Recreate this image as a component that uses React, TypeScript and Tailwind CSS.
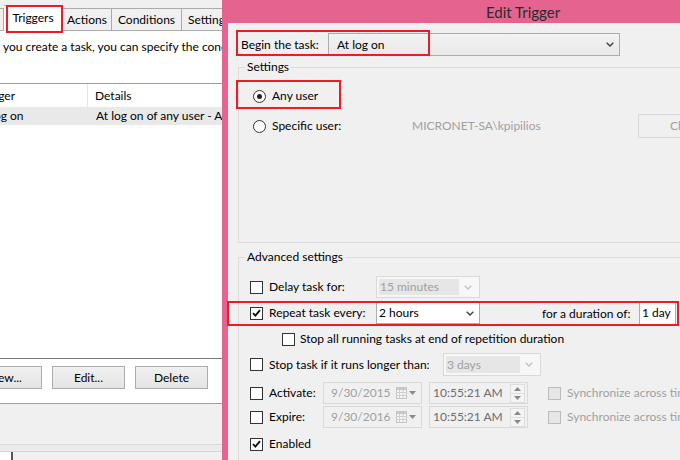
import React from "react";

function Check({ checked = false, disabled = false }: { checked?: boolean; disabled?: boolean }) {
  return (
    <span
      className={
        disabled
          ? "w-[13px] h-[13px] shrink-0 border border-[#bcbcbc] bg-[#e6e6e6] flex items-center justify-center"
          : "w-[13px] h-[13px] shrink-0 border border-[#333333] bg-white flex items-center justify-center"
      }
    >
      {checked && (
        <svg width="9" height="8" viewBox="0 0 9 8">
          <path d="M1 4.2 L3.4 6.6 L8 1.2" stroke="#111" strokeWidth="1.9" fill="none" />
        </svg>
      )}
    </span>
  );
}

function Radio({ checked = false }: { checked?: boolean }) {
  return (
    <span className="w-[13px] h-[13px] shrink-0 rounded-full border border-[#333333] bg-white flex items-center justify-center">
      {checked && <span className="w-[5px] h-[5px] rounded-full bg-[#222222]" />}
    </span>
  );
}

function Chevron({ color = "#404040" }: { color?: string }) {
  return (
    <svg width="8" height="5" viewBox="0 0 8 5">
      <path d="M0.7 0.7 L4 4 L7.3 0.7" stroke={color} strokeWidth="1.4" fill="none" />
    </svg>
  );
}

function Calendar() {
  return (
    <svg width="11" height="12" viewBox="0 0 11 12">
      <rect x="0.5" y="0.5" width="10" height="11" fill="#f4f4f4" stroke="#c4c4c4" />
      <rect x="0.5" y="0.5" width="10" height="2.5" fill="#c8c8c8" />
      <path d="M3.5 3 V11.5 M7 3 V11.5 M0.5 5.5 H10.5 M0.5 8.5 H10.5" stroke="#d0d0d0" strokeWidth="1" />
    </svg>
  );
}

function SmallTri({ up = false }: { up?: boolean }) {
  return (
    <svg width="7" height="4" viewBox="0 0 7 4">
      {up ? <path d="M0 4 L3.5 0 L7 4 Z" fill="#8a8a8a" /> : <path d="M0 0 L3.5 4 L7 0 Z" fill="#8a8a8a" />}
    </svg>
  );
}

function DisabledCombo({ text, w, h }: { text: string; w: string; h: string }) {
  return (
    <div className={`${w} ${h} shrink-0 border border-[#d9d9d9] bg-[#f7f7f7] flex items-stretch p-[2px]`}>
      <div className="flex-1 bg-[#e6e6e6] text-[#a0a0a0] pl-[1px] flex items-center">{text}</div>
      <div className="w-[18px] flex items-center justify-center">
        <Chevron color="#c2c2c2" />
      </div>
    </div>
  );
}

function DateBox({ text }: { text: string }) {
  return (
    <div className="w-[99px] h-[22px] shrink-0 border border-[#d9d9d9] bg-[#f0f0f0] flex items-center pl-[7px]">
      <span className="text-[#a0a0a0] flex-1">{text}</span>
      <span className="flex items-center gap-[2px] pr-[5px]">
        <Calendar />
        <SmallTri />
      </span>
    </div>
  );
}

function TimeBox() {
  return (
    <div className="w-[99px] h-[22px] shrink-0 border border-[#d9d9d9] bg-[#f0f0f0] flex items-center pl-[3px]">
      <span className="text-[#6d6d6d] flex-1">10:55:21 AM</span>
      <span className="w-[15px] h-[19px] mr-[2px] flex flex-col border border-[#dedede]">
        <span className="flex-1 flex items-center justify-center border-b border-[#dedede] bg-[#f4f4f4]">
          <SmallTri up />
        </span>
        <span className="flex-1 flex items-center justify-center bg-[#f4f4f4]">
          <SmallTri />
        </span>
      </span>
    </div>
  );
}

function Btn({ label, extra = "" }: { label: string; extra?: string }) {
  return (
    <div
      className={`w-[73px] h-[23px] shrink-0 border border-[#acacac] bg-gradient-to-b from-[#f0f0f0] to-[#e5e5e5] flex items-center justify-center text-black ${extra}`}
    >
      {label}
    </div>
  );
}

function LeftWindow() {
  return (
    <div className="w-[222px] h-[460px] shrink-0 flex flex-col bg-[#f0f0f0] overflow-hidden">
      {/* tabs */}
      <div className="h-[31px] shrink-0 flex items-end border-b border-[#acacac]">
        <div className="w-[4px] h-[22px] shrink-0 border-r border-t border-[#acacac] bg-[#f0f0f0]" />
        <div className="w-[59px] h-[26px] shrink-0 -mb-[1px] border border-b-0 border-l-0 border-[#acacac] bg-white flex items-center justify-center pb-[2px]">
          Triggers
        </div>
        <div className="w-[49px] h-[22px] shrink-0 border-t border-r border-[#acacac] bg-[#f0f0f0] flex items-center justify-center">
          Actions
        </div>
        <div className="w-[70px] h-[22px] shrink-0 border-t border-r border-[#acacac] bg-[#f0f0f0] flex items-center justify-center">
          Conditions
        </div>
        <div className="w-[60px] h-[22px] shrink-0 border-t border-r border-[#acacac] bg-[#f0f0f0] flex items-center pl-[6px] whitespace-nowrap">
          Settings
        </div>
      </div>
      {/* panel */}
      <div className="h-[373px] shrink-0 bg-white border-b border-[#a0a0a0] flex flex-col">
        <div className="mt-[8px] h-[16px] pl-[3px] whitespace-nowrap overflow-hidden">
          you create a task, you can specify the conditions that will trigger the task.
        </div>
        <div className="mt-[28px] h-[276px] shrink-0 border-t border-[#a0a0a0] border-b border-b-[#7a7a7a] flex flex-col">
          <div className="h-[23px] shrink-0 flex items-center">
            <div className="w-[88px] h-full shrink-0 flex items-center border-r border-[#e5e5e5] overflow-hidden">
              <span className="-ml-[21px] whitespace-nowrap">Trigger</span>
            </div>
            <div className="pl-[7px] whitespace-nowrap">Details</div>
          </div>
          <div className="h-[18px] shrink-0 flex items-center bg-[#e9e9e9]">
            <div className="w-[88px] shrink-0 overflow-hidden">
              <span className="-ml-[24px] whitespace-nowrap inline-block">At log on</span>
            </div>
            <div className="pl-[8px] whitespace-nowrap overflow-hidden">At log on of any user - At log on of any user</div>
          </div>
        </div>
        <div className="mt-[7px] flex items-center">
          <div className="w-[42px] overflow-hidden shrink-0">
            <Btn label="New..." extra="-ml-[31px]" />
          </div>
          <div className="ml-[10px]">
            <Btn label="Edit..." />
          </div>
          <div className="ml-[10px]">
            <Btn label="Delete" />
          </div>
        </div>
      </div>
      <div className="h-[41px] shrink-0 bg-[#f0f0f0] border-b border-[#d9d9d9]" />
      <div className="h-[7px] shrink-0 bg-[#ebebeb] border-b border-[#d4d4d4]" />
      <div className="flex-1 flex">
        <div className="w-[11px] bg-white" />
        <div className="w-[2px] bg-[#555555]" />
        <div className="flex-1 bg-[#f0f0f0]" />
      </div>
    </div>
  );
}

function Dialog() {
  return (
    <div className="w-[602px] h-[460px] shrink-0 bg-[#e5638f] flex flex-col pl-[6px]">
      <div className="h-[23px] shrink-0 flex items-center justify-center text-[15px] text-[#2b2b2b] -ml-[6px]">
        Edit Trigger
      </div>
      <div className="flex-1 bg-[#f0f0f0] flex flex-col">
        {/* begin the task */}
        <div className="mt-[10px] ml-[13px] h-[23px] flex items-center">
          <span className="w-[87px] shrink-0">Begin the task:</span>
          <div className="w-[292px] h-[23px] border border-[#acacac] bg-gradient-to-b from-[#f2f2f2] to-[#e9e9e9] flex items-center pl-[8px]">
            <span className="flex-1">At log on</span>
            <span className="pr-[5px] flex items-center">
              <Chevron />
            </span>
          </div>
        </div>

        {/* Settings */}
        <fieldset className="mt-[3px] ml-[10px] w-[470px] h-[184px] shrink-0 border border-[#dcdcdc]">
          <legend className="ml-[6px] px-[2px] leading-[16px]">Settings</legend>
          <div className="mt-[13px] pl-[14px] h-[16px] flex items-center">
            <Radio checked />
            <span className="ml-[6px]">Any user</span>
          </div>
          <div className="mt-[10px] pl-[14px] h-[24px] flex items-center">
            <Radio />
            <span className="ml-[6px] w-[140px] shrink-0">Specific user:</span>
            <span className="w-[226px] shrink-0 text-[#a0a0a0]">MICRONET-SA\kpipilios</span>
            <div className="w-[100px] h-[24px] shrink-0 border border-[#d9d9d9] bg-[#f0f0f0] flex items-center pl-[31px] text-[#a0a0a0] whitespace-nowrap">
              Change User...
            </div>
          </div>
        </fieldset>

        {/* Advanced */}
        <fieldset className="mt-[6px] ml-[10px] w-[470px] h-[260px] shrink-0 border border-[#dcdcdc]">
          <legend className="ml-[6px] px-[2px] leading-[16px]">Advanced settings</legend>
          <div className="mt-[11px] pl-[11px] h-[22px] flex items-center">
            <Check />
            <span className="ml-[6px] w-[107px] shrink-0">Delay task for:</span>
            <DisabledCombo text="15 minutes" w="w-[104px]" h="h-[22px]" />
          </div>
          <div className="mt-[4px] pl-[11px] h-[22px] flex items-center">
            <Check checked />
            <span className="ml-[6px] w-[107px] shrink-0">Repeat task every:</span>
            <div className="w-[104px] h-[22px] shrink-0 border border-[#abadb3] bg-white flex items-center pl-[2px]">
              <span className="flex-1">2 hours</span>
              <span className="w-[18px] flex items-center justify-center">
                <Chevron />
              </span>
            </div>
            <span className="ml-[62px] w-[97px] shrink-0 whitespace-nowrap pt-[2px]">for a duration of:</span>
            <div className="w-[37px] h-[24px] shrink-0 border border-[#abadb3] bg-white flex items-center pl-[2px] whitespace-nowrap">
              1 day
            </div>
          </div>
          <div className="mt-[8px] pl-[43px] h-[14px] flex items-center">
            <Check />
            <span className="ml-[5px] whitespace-nowrap">Stop all running tasks at end of repetition duration</span>
          </div>
          <div className="mt-[7px] pl-[11px] h-[23px] flex items-center">
            <Check />
            <span className="ml-[6px] w-[174px] shrink-0 whitespace-nowrap">Stop task if it runs longer than:</span>
            <DisabledCombo text="3 days" w="w-[98px]" h="h-[23px]" />
          </div>
          <div className="mt-[6px] pl-[11px] h-[22px] flex items-center">
            <Check />
            <span className="ml-[6px] w-[54px] shrink-0">Activate:</span>
            <DateBox text="9/30/2015" />
            <span className="ml-[7px]">
              <TimeBox />
            </span>
            <span className="ml-[20px]">
              <Check disabled />
            </span>
            <span className="ml-[6px] text-[#a0a0a0] whitespace-nowrap">Synchronize across time zones</span>
          </div>
          <div className="mt-[2px] pl-[11px] h-[22px] flex items-center">
            <Check />
            <span className="ml-[6px] w-[54px] shrink-0">Expire:</span>
            <DateBox text="9/30/2016" />
            <span className="ml-[7px]">
              <TimeBox />
            </span>
            <span className="ml-[20px]">
              <Check disabled />
            </span>
            <span className="ml-[6px] text-[#a0a0a0] whitespace-nowrap">Synchronize across time zones</span>
          </div>
          <div className="mt-[9px] pl-[11px] h-[14px] flex items-center">
            <Check checked />
            <span className="ml-[6px]">Enabled</span>
          </div>
        </fieldset>
      </div>
    </div>
  );
}

export default function App() {
  return (
    <div className="relative w-[680px] h-[460px] overflow-hidden flex bg-[#f0f0f0] text-[12px] leading-[16px] text-black font-['Lato','Segoe_UI',sans-serif]">
      <LeftWindow />
      <Dialog />
      {/* annotation boxes */}
      <div className="absolute left-[6px] top-[5px] w-[57px] h-[28px] border-2 border-[#ed1c24]" />
      <div className="absolute left-[236px] top-[30px] w-[194px] h-[26px] border-2 border-[#ed1c24]" />
      <div className="absolute left-[236px] top-[80px] w-[105px] h-[29px] border-2 border-[#ed1c24]" />
      <div className="absolute left-[227px] top-[301px] w-[452px] h-[25px] border-2 border-[#ed1c24]" />
    </div>
  );
}
